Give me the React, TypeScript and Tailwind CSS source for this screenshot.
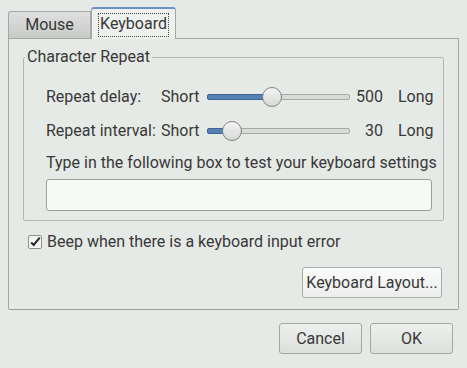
import React from 'react';

const font = { fontFamily: 'Roboto, "Noto Sans", sans-serif' };

const Slider = ({ fraction }: { fraction: number }) => {
  // knob is 20px wide, trough 143px
  const left = Math.round(fraction * 123);
  return (
    <div className="relative h-[22px] w-[143px] flex items-center">
      <div className="h-[6px] w-full rounded-[2px] border border-[#a6a9a6] bg-[#d9dbd9]" />
      <div
        className="absolute left-0 top-[8px] h-[6px] rounded-l-[2px] border border-[#3d6596] bg-[#5680b5]"
        style={{ width: left + 10 }}
      />
      <div
        className="absolute top-[1px] h-[20px] w-[20px] rounded-full border border-[#7f827f] bg-gradient-to-b from-[#f4f5f4] to-[#d6d8d6]"
        style={{ left }}
      />
    </div>
  );
};

const Row = ({ label, value, fraction }: { label: string; value: string; fraction: number }) => (
  <div className="flex h-[22px] items-center">
    <span className="w-[115px]">{label}</span>
    <span className="w-[46px]">Short</span>
    <Slider fraction={fraction} />
    <span className="w-[33px] text-right">{value}</span>
    <span className="ml-[15px]">Long</span>
  </div>
);

export default function App() {
  return (
    <div className="h-[368px] w-[467px] bg-[#e6eae6] text-[16px] text-[#383838] leading-[18px]" style={font}>
      {/* tabs */}
      <div className="flex h-[38px] items-end pl-[8px]">
        <div className="flex h-[27px] w-[83px] items-center justify-center rounded-tl-[3px] border border-b-0 border-[#a4a7a4] bg-gradient-to-b from-[#dedfde] to-[#c9cbc9]">
          Mouse
        </div>
        <div className="relative z-10 -mb-[1px] flex h-[32px] w-[85px] items-center justify-center rounded-t-[3px] border border-b-0 border-[#a4a7a4] border-t-2 border-t-[#6c94c8] bg-[#eef1ee] pt-[1px]">
          <span className="border border-dotted border-[#444] px-[1px] pb-[2px] leading-[20px]">Keyboard</span>
        </div>
      </div>

      {/* notebook page */}
      <div className="ml-[8px] h-[272px] w-[451px] rounded-b-[2px] border border-[#a4a7a4] border-b-[#9a9d9a] px-[14px] pt-[9px]">
        <fieldset className="h-[173px] w-[421px] rounded-[2px] border border-[#b4b7b4] pl-[22px]">
          <legend className="-ml-[21px] px-[2px] leading-[18px]">Character Repeat</legend>
          <div className="flex flex-col gap-[12px] pt-[20px]">
            <Row label="Repeat delay:" value="500" fraction={0.45} />
            <Row label="Repeat interval:" value="30" fraction={0.126} />
          </div>
          <div className="mt-[12px]">Type in the following box to test your keyboard settings</div>
          <div className="mt-[7px] h-[32px] w-[386px] rounded-[3px] border border-[#9c9f9c] bg-[#f6f9f6]" />
        </fieldset>

        <label className="mt-[12px] flex items-center gap-[5px] pl-[5px]">
          <span className="flex h-[14px] w-[14px] items-center justify-center rounded-[2px] border border-[#8e918e] bg-[#f3f4f3]">
            <svg viewBox="0 0 14 14" className="h-[14px] w-[14px]">
              <path d="M2.5 7.5 L5.5 10.5 L12.5 2" fill="none" stroke="#2a2a2a" strokeWidth="2.4" />
            </svg>
          </span>
          <span>Beep when there is a keyboard input error</span>
        </label>

        <div className="mt-[16px] flex justify-end pr-[2px]">
          <button className="h-[31px] w-[140px] rounded-[3px] border border-[#a9aca9] bg-gradient-to-b from-[#fafbfa] to-[#eceeec]">
            Keyboard Layout...
          </button>
        </div>
      </div>

      {/* dialog buttons */}
      <div className="mt-[13px] flex justify-end gap-[8px] pr-[14px]">
        <button className="h-[31px] w-[83px] rounded-[3px] border border-[#a4a7a4] bg-gradient-to-b from-[#eef0ee] to-[#dcdfdc]">
          Cancel
        </button>
        <button className="h-[31px] w-[83px] rounded-[3px] border border-[#a4a7a4] bg-gradient-to-b from-[#eef0ee] to-[#dcdfdc]">
          OK
        </button>
      </div>
    </div>
  );
}
